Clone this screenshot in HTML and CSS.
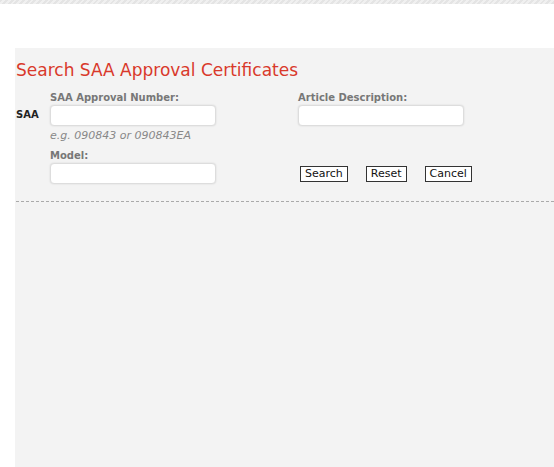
FILE: index.html
```html
<!DOCTYPE html>
<html lang="en">
<head>
    <meta charset="UTF-8">
    <title>Search SAA Approval Certificates</title>
    <link rel="stylesheet" href="styles.css">
</head>
<body>
    <div class="topbar"></div>
    <div class="panel">
        <h1 class="title">Search SAA Approval Certificates</h1>
        <form class="search">
            <div class="side">SAA</div>
            <div class="field">
                <label for="saa-no">SAA Approval Number:</label>
                <input type="text" id="saa-no">
                <p class="hint">e.g. 090843 or 090843EA</p>
            </div>
            <div class="field">
                <label for="article">Article Description:</label>
                <input type="text" id="article">
            </div>
            <div class="side"></div>
            <div class="field model">
                <label for="model">Model:</label>
                <input type="text" id="model">
            </div>
            <div class="buttons">
                <button type="button">Search</button>
                <button type="reset">Reset</button>
                <button type="button">Cancel</button>
            </div>
        </form>
        <div class="divider"></div>
    </div>
</body>
</html>
```

FILE: styles.css
```css
*{ box-sizing: border-box;}
html, body{
    margin:0;
    height:100%;
}
body{
    background:#fff;
    font-family:"DejaVu Sans", Verdana, sans-serif;
    font-size:11px;
}
.topbar{
    height:4px;
    background:repeating-linear-gradient(135deg, #e4e4e4 0 2px, #f0f0f0 2px 4px);
}
.panel{
    margin:44px 0 0 15px;
    background:#f3f3f3;
    min-height:calc(100% - 48px);
    padding:1px 0 0 1px;
}
.title{
    margin:11px 0 0;
    font-size:17px;
    font-weight:normal;
    color:#d9392b;
    line-height:20px;
}
.search{
    display:grid;
    grid-template-columns:34px 248px 1fr;
    align-items:start;
    margin-top:11px;
}
.side{
    font-weight:bold;
    font-size:10px;
    color:#222;
    line-height:14px;
    padding-top:17px;
}
.field label{
    display:block;
    font-size:10px;
    font-weight:bold;
    color:#777;
    line-height:14px;
}
.field input{
    display:block;
    width:166px;
    height:21px;
    border:1px solid #ddd;
    border-radius:4px;
    background:#fff;
    box-shadow:0 0 2px rgba(0,0,0,0.12);
    margin:0;
}
.hint{
    margin:3px 0 0;
    font-style:italic;
    color:#888;
    font-size:11px;
    line-height:14px;
}
.model{
    margin-top:6px;
}
.buttons{
    display:flex;
    gap:18px;
    padding:23px 0 0 2px;
    align-items:flex-start;
}
.buttons button{
    font-family:"DejaVu Sans", Verdana, sans-serif;
    font-size:11px;
    background:#fff;
    border:1px solid #333;
    border-radius:0;
    padding:0 4px;
    line-height:14px;
    color:#111;
}
.divider{
    margin-top:17px;
    height:1px;
    background:repeating-linear-gradient(to right, #aaa 0 3px, transparent 3px 5px);
}
```
